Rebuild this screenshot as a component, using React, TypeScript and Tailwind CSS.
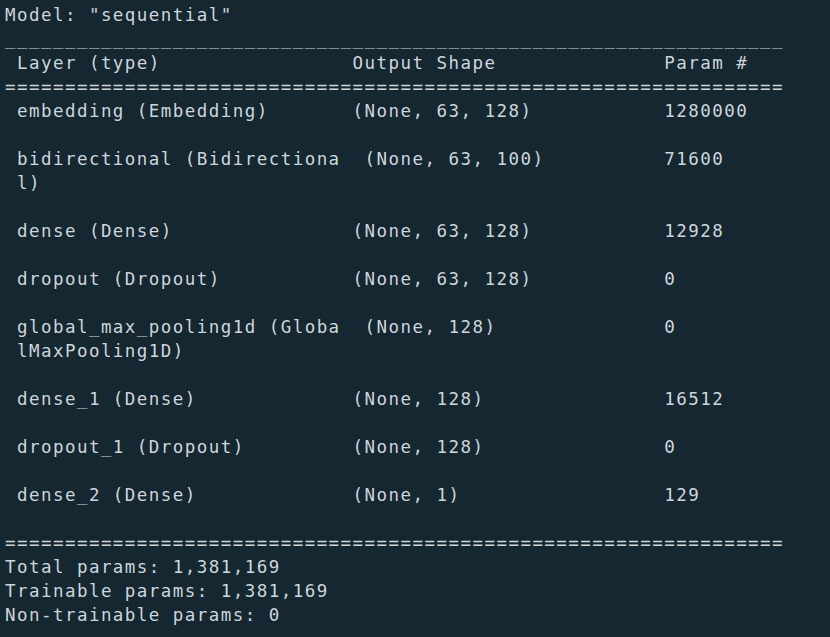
import React from "react";

const row = (a: string, b: string, c: string) =>
  (" " + a).padEnd(29) + b.padEnd(26) + c;

const lines: string[] = [
  'Model: "sequential"',
  "_".repeat(65),
  row("Layer (type)", "Output Shape", "Param #"),
  "=".repeat(65),
  row("embedding (Embedding)", "(None, 63, 128)", "1280000"),
  "",
  " bidirectional (Bidirectiona  (None, 63, 100)          71600",
  " l)",
  "",
  row("dense (Dense)", "(None, 63, 128)", "12928"),
  "",
  row("dropout (Dropout)", "(None, 63, 128)", "0"),
  "",
  " global_max_pooling1d (Globa  (None, 128)              0",
  " lMaxPooling1D)",
  "",
  row("dense_1 (Dense)", "(None, 128)", "16512"),
  "",
  row("dropout_1 (Dropout)", "(None, 128)", "0"),
  "",
  row("dense_2 (Dense)", "(None, 1)", "129"),
  "",
  "=".repeat(65),
  "Total params: 1,381,169",
  "Trainable params: 1,381,169",
  "Non-trainable params: 0",
];

export default function App() {
  return (
    <div className="w-[830px] h-[637px] overflow-hidden bg-[#152731] text-[#cdd5da]">
      <div
        className="flex flex-col pl-[5px] -mt-[21px] text-[17.5px] leading-[24px] tracking-[1.45px]"
        style={{ fontFamily: '"DejaVu Sans Mono", "Liberation Mono", monospace' }}
      >
        <div className="whitespace-pre">{"                         (        )                              ()"}</div>
        {lines.map((l, i) => (
          <div key={i} className="whitespace-pre h-[24px]">
            {l}
          </div>
        ))}
      </div>
    </div>
  );
}
